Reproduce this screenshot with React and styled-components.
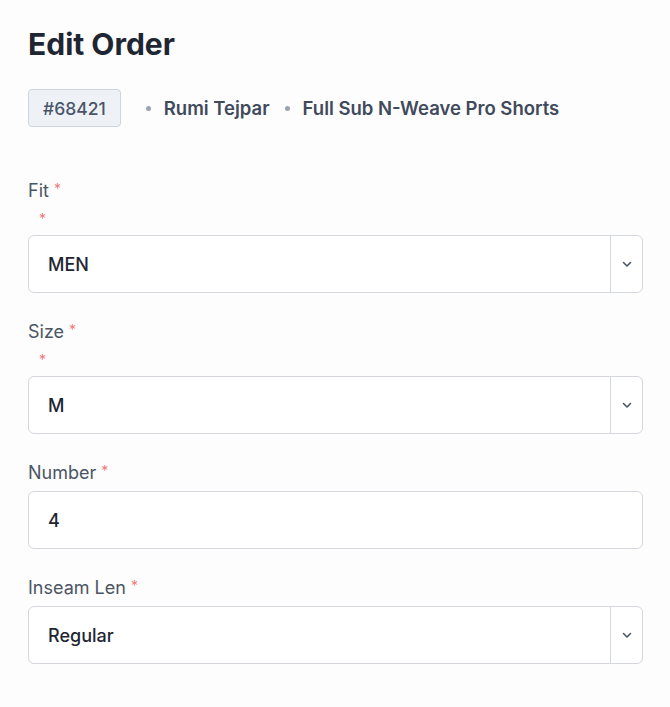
import React from "react";
import styled, { createGlobalStyle } from "styled-components";

const Global = createGlobalStyle`
  html, body { margin: 0; padding: 0; background: #fdfdfd; }
  body { font-family: "Inter", "Noto Sans", sans-serif; -webkit-font-smoothing: antialiased; }
`;

const Page = styled.div`
  width: 615px;
  padding: 28px 27px 40px 28px;
`;

const Title = styled.h1`
  margin: 0;
  font-size: 30px;
  line-height: 32px;
  font-weight: 700;
  color: #1f2633;
`;

const Meta = styled.div`
  display: flex;
  align-items: center;
  margin-top: 29px;
  height: 38px;
`;

const Badge = styled.span`
  display: inline-flex;
  align-items: center;
  height: 36px;
  padding: 0 14px;
  border: 1px solid #cdd5e0;
  border-radius: 4px;
  background: #eef2f7;
  color: #4a5568;
  font-size: 17.5px;
  font-weight: 500;
`;

const Dot = styled.span`
  width: 5px;
  height: 5px;
  border-radius: 50%;
  background: #9aa3b0;
  margin: 0 13px 0 ${(p) => (p.$first ? "25px" : "15px")};
`;

const MetaText = styled.span`
  color: #3f4a5c;
  font-size: 18.5px;
  font-weight: 600;
`;

const Form = styled.div`
  display: flex;
  flex-direction: column;
  gap: 27px;
  margin-top: 52px;
`;

const Field = styled.div`
  display: flex;
  flex-direction: column;
`;

const Label = styled.label`
  font-size: 18px;
  line-height: 20px;
  color: #4b5563;
  margin-bottom: ${(p) => (p.$stray ? "0" : "8px")};
`;

const Req = styled.span`
  color: #f07a7a;
  font-size: 14px;
  margin-left: 5px;
  vertical-align: 3px;
`;

const StrayReq = styled.span`
  color: #f07a7a;
  font-size: 14px;
  line-height: 14px;
  height: 14px;
  margin: 11px 0 9px 11px;
`;

const Box = styled.div`
  display: flex;
  align-items: stretch;
  height: 56px;
  border: 1px solid #d4d7dc;
  border-radius: 6px;
  background: #fff;
`;

const Value = styled.div`
  flex: 1;
  display: flex;
  align-items: center;
  padding-left: 19px;
  font-size: 18px;
  color: #1f2633;
  font-weight: 500;
`;

const Caret = styled.div`
  width: 31px;
  border-left: 1px solid #d4d7dc;
  display: flex;
  align-items: center;
  justify-content: center;
  color: #4b5563;
`;

const Chevron = () => (
  <svg width="10" height="7" viewBox="0 0 10 7" fill="none">
    <path d="M1.5 1.5 L5 5 L8.5 1.5" stroke="currentColor" strokeWidth="1.6" strokeLinecap="round" strokeLinejoin="round" />
  </svg>
);

const FieldBlock = ({ label, value, select, stray }) => (
  <Field>
    <Label $stray={stray}>
      {label}
      <Req>*</Req>
    </Label>
    {stray && <StrayReq>*</StrayReq>}
    <Box>
      <Value>{value}</Value>
      {select && (
        <Caret>
          <Chevron />
        </Caret>
      )}
    </Box>
  </Field>
);

export default function App() {
  return (
    <>
      <Global />
      <Page>
        <Title>Edit Order</Title>
        <Meta>
          <Badge>#68421</Badge>
          <Dot $first />
          <MetaText>Rumi Tejpar</MetaText>
          <Dot />
          <MetaText>Full Sub N-Weave Pro Shorts</MetaText>
        </Meta>
        <Form>
          <FieldBlock label="Fit" value="MEN" select stray />
          <FieldBlock label="Size" value="M" select stray />
          <FieldBlock label="Number" value="4" />
          <FieldBlock label="Inseam Len" value="Regular" select />
        </Form>
      </Page>
    </>
  );
}
